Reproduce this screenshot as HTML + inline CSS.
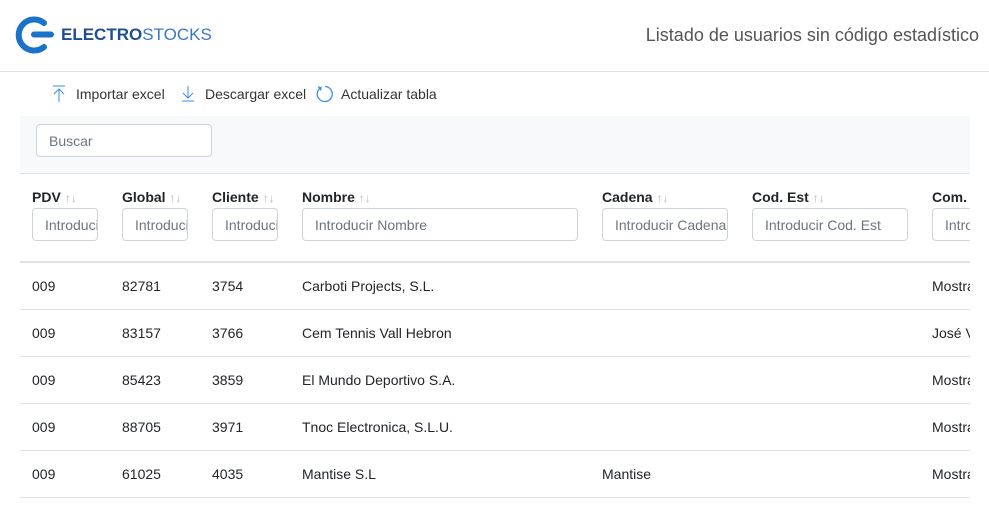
<!DOCTYPE html>
<html><head><meta charset="utf-8"><style>
*{box-sizing:border-box;margin:0;padding:0}
body{width:989px;height:511px;overflow:hidden;background:#fff;font-family:"Liberation Sans",sans-serif;color:#212529;position:relative}
.abs{position:absolute;white-space:nowrap}
.hdr{font-weight:bold;font-size:14px;top:189px}
.hdr span{color:#bbb;font-weight:normal;font-size:12px}
.inp{position:absolute;top:208px;height:33px;border:1px solid #ced4da;border-radius:4px;font-size:14px;color:#6c757d;padding:8px 12px;overflow:hidden;white-space:nowrap;background:#fff}
.cell{position:absolute;font-size:14px;font-weight:500;color:#212529}
.line{position:absolute;left:20px;width:950px;height:1px;background:#dee2e6}
</style></head><body>
<svg class="abs" style="left:12px;top:14px" width="45" height="42" viewBox="0 0 45 42">
<path d="M32 9 A15.5 15.5 0 1 0 32 33" fill="none" stroke="#1b73c9" stroke-width="6" stroke-linecap="round"/>
<line x1="22" y1="20.5" x2="39" y2="20.5" stroke="#1b73c9" stroke-width="6" stroke-linecap="round"/>
</svg>
<div class="abs" style="left:61px;top:25px;font-size:17px;letter-spacing:0"><b style="color:#1e4e93">ELECTRO</b><span style="color:#3a78c3">STOCKS</span></div>
<div class="abs" style="right:10px;top:25px;font-size:18px;color:#555">Listado de usuarios sin código estadístico</div>
<div class="abs" style="left:0;top:71px;width:989px;height:1px;background:#e3e3e3"></div>
<svg class="abs" style="left:52px;top:85px" width="14" height="18"><line x1="1" y1="1" x2="13" y2="1" stroke="#3a8ee6"/><line x1="7" y1="4" x2="7" y2="17" stroke="#3a8ee6"/><path d="M2 9 L7 4 L12 9" fill="none" stroke="#3a8ee6"/></svg>
<div class="abs" style="left:76px;top:86px;font-size:14px;color:#333">Importar excel</div>
<svg class="abs" style="left:181px;top:85px" width="14" height="18"><line x1="1" y1="16" x2="13" y2="16" stroke="#3a8ee6"/><line x1="7" y1="1" x2="7" y2="13" stroke="#3a8ee6"/><path d="M2 8 L7 13 L12 8" fill="none" stroke="#3a8ee6"/></svg>
<div class="abs" style="left:205px;top:86px;font-size:14px;color:#333">Descargar excel</div>
<svg class="abs" style="left:316px;top:85px" width="18" height="18"><path d="M5 2.5 A7.5 7.5 0 1 0 9 1.5" fill="none" stroke="#3a8ee6" stroke-width="1.3"/><path d="M2 2 L5 2.5 L4.5 5.5" fill="none" stroke="#3a8ee6" stroke-width="1.3"/></svg>
<div class="abs" style="left:341px;top:86px;font-size:14px;color:#333">Actualizar tabla</div>
<div class="abs" style="left:20px;top:116px;width:950px;height:57px;background:#f8f9fa"></div>
<div class="inp" style="left:36px;top:124px;width:176px;height:33px">Buscar</div>
<div class="line" style="top:173px"></div>
<div class="abs hdr" style="left:32px">PDV <span>↑↓</span></div>
<div class="abs hdr" style="left:122px">Global <span>↑↓</span></div>
<div class="abs hdr" style="left:212px">Cliente <span>↑↓</span></div>
<div class="abs hdr" style="left:302px">Nombre <span>↑↓</span></div>
<div class="abs hdr" style="left:602px">Cadena <span>↑↓</span></div>
<div class="abs hdr" style="left:752px">Cod. Est <span>↑↓</span></div>
<div class="abs hdr" style="left:932px;width:38px;overflow:hidden">Com. F</div>
<div class="inp" style="left:32px;width:66px">Introducir</div>
<div class="inp" style="left:122px;width:66px">Introducir</div>
<div class="inp" style="left:212px;width:66px">Introducir</div>
<div class="inp" style="left:302px;width:276px">Introducir Nombre</div>
<div class="inp" style="left:602px;width:126px">Introducir Cadena</div>
<div class="inp" style="left:752px;width:156px">Introducir Cod. Est</div>
<div class="inp" style="left:932px;width:60px;border-right:none;border-radius:4px 0 0 4px">Introducir</div>
<div class="abs" style="left:970px;top:170px;width:19px;height:341px;background:#fff"></div>
<div class="line" style="top:261px;height:2px"></div>
<div class="abs" style="left:0;top:270px;width:970px;overflow:hidden;height:241px">
<div style="position:absolute;top:0;left:0;width:1100px">
<div class="cell" style="left:32px;top:8px">009</div><div class="cell" style="left:122px;top:8px">82781</div><div class="cell" style="left:212px;top:8px">3754</div><div class="cell" style="left:302px;top:8px">Carboti Projects, S.L.</div><div class="cell" style="left:932px;top:8px">Mostrador</div>
<div class="cell" style="left:32px;top:55px">009</div><div class="cell" style="left:122px;top:55px">83157</div><div class="cell" style="left:212px;top:55px">3766</div><div class="cell" style="left:302px;top:55px">Cem Tennis Vall Hebron</div><div class="cell" style="left:932px;top:55px">José Villa</div>
<div class="cell" style="left:32px;top:102px">009</div><div class="cell" style="left:122px;top:102px">85423</div><div class="cell" style="left:212px;top:102px">3859</div><div class="cell" style="left:302px;top:102px">El Mundo Deportivo S.A.</div><div class="cell" style="left:932px;top:102px">Mostrador</div>
<div class="cell" style="left:32px;top:149px">009</div><div class="cell" style="left:122px;top:149px">88705</div><div class="cell" style="left:212px;top:149px">3971</div><div class="cell" style="left:302px;top:149px">Tnoc Electronica, S.L.U.</div><div class="cell" style="left:932px;top:149px">Mostrador</div>
<div class="cell" style="left:32px;top:196px">009</div><div class="cell" style="left:122px;top:196px">61025</div><div class="cell" style="left:212px;top:196px">4035</div><div class="cell" style="left:302px;top:196px">Mantise S.L</div><div class="cell" style="left:602px;top:196px">Mantise</div><div class="cell" style="left:932px;top:196px">Mostrador</div>
</div></div>
<div class="line" style="top:309px"></div>
<div class="line" style="top:356px"></div>
<div class="line" style="top:403px"></div>
<div class="line" style="top:450px"></div>
<div class="line" style="top:497px"></div>
</body></html>
